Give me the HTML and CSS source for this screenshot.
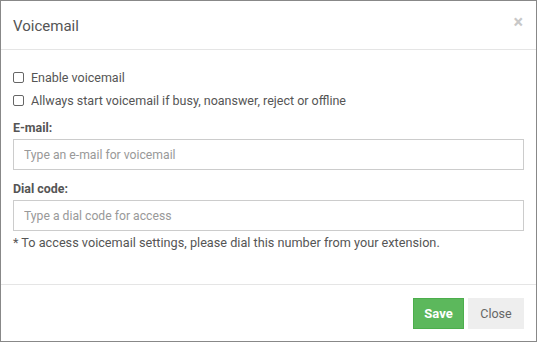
FILE: index.html
```html
<!DOCTYPE html>
<html>
<head>
<meta charset="utf-8">
<link rel="stylesheet" href="styles.css">
</head>
<body>
<div class="modal">
  <div class="modal-header">
    <h4 class="modal-title">Voicemail</h4>
    <span class="close-x">×</span>
  </div>
  <div class="modal-body">
    <label class="check-row"><input type="checkbox" class="check"> Enable voicemail</label>
    <label class="check-row"><input type="checkbox" class="check"> Allways start voicemail if busy, noanswer, reject or offline</label>
    <div class="field-label first">E-mail:</div>
    <input class="text-input" type="text" placeholder="Type an e-mail for voicemail">
    <div class="field-label">Dial code:</div>
    <input class="text-input" type="text" placeholder="Type a dial code for access">
    <p class="note">* To access voicemail settings, please dial this number from your extension.</p>
  </div>
  <div class="modal-footer">
    <button class="btn btn-save">Save</button>
    <button class="btn btn-close">Close</button>
  </div>
</div>
</body>
</html>
```
FILE: styles.css
```css
html, body {
  margin: 0;
  padding: 0;
  background: #fff;
}
body {
  font-family: Roboto, "Liberation Sans", sans-serif;
  color: #555;
  font-size: 12.5px;
}
.modal {
  width: 537px;
  height: 342px;
  box-sizing: border-box;
  border: 1px solid #888;
  display: flex;
  flex-direction: column;
  background: #fff;
}
.modal-header {
  height: 48px;
  border-bottom: 1px solid #e5e5e5;
  display: flex;
  align-items: center;
  justify-content: space-between;
  padding: 0 12px;
}
.modal-title {
  margin: 0;
  font-size: 15px;
  font-weight: 400;
  color: #555;
  padding-top: 2px;
}
.close-x {
  color: #c8c8c8;
  font-size: 18px;
  font-weight: 700;
  line-height: 1;
  margin-top: -6px;
  margin-right: 1px;
}
.modal-body {
  flex: 1;
  padding: 16px 12px 0 12px;
  display: flex;
  flex-direction: column;
}
.check-row {
  display: flex;
  align-items: center;
  height: 23px;
  font-size: 12.5px;
  color: #555;
}
.check {
  appearance: none;
  -webkit-appearance: none;
  width: 11px;
  height: 11px;
  border: 1px solid #666;
  border-radius: 2px;
  margin: 0 7px 0 0;
  box-sizing: border-box;
  background: #fff;
}
.field-label {
  font-weight: 700;
  font-size: 12.4px;
  line-height: 18px;
  margin-top: 10px;
  margin-bottom: 2px;
  color: #555;
}
.field-label.first {
  margin-top: 7px;
}
.text-input {
  height: 31px;
  box-sizing: border-box;
  border: 1px solid #ccc;
  padding: 0 10px;
  font-family: Roboto, "Liberation Sans", sans-serif;
  font-size: 12.2px;
  color: #555;
  margin: 0;
  outline: none;
}
.text-input::placeholder {
  color: #999;
}
.note {
  margin: 3px 0 0 0;
  line-height: 18px;
  font-size: 12.7px;
  color: #555;
}
.modal-footer {
  border-top: 1px solid #e5e5e5;
  padding: 13px 12px 12px 12px;
  display: flex;
  justify-content: flex-end;
  gap: 4px;
}
.btn {
  height: 31px;
  box-sizing: border-box;
  font-family: Roboto, "Liberation Sans", sans-serif;
  font-size: 13px;
  border: 1px solid transparent;
  margin: 0;
  padding: 0;
  cursor: pointer;
}
.btn-save {
  width: 51px;
  background: #5cb85c;
  border-color: #4cae4c;
  color: #fff;
  font-weight: 700;
}
.btn-close {
  width: 56px;
  background: #eee;
  border-color: #eee;
  color: #666;
  font-size: 12.5px;
}
```
